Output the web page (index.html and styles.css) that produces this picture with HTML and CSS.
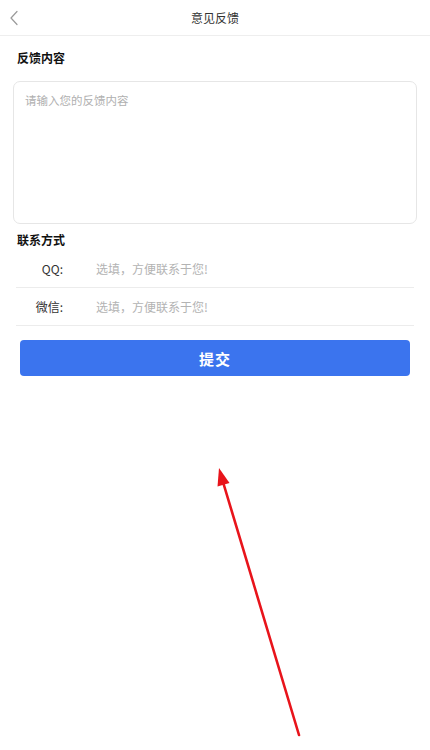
FILE: index.html
```html
<!DOCTYPE html>
<html lang="zh">
<head>
<meta charset="utf-8">
<title>意见反馈</title>
<link rel="stylesheet" href="styles.css">
</head>
<body>
<div class="page">
  <header class="nav">
    <span class="back">
      <svg width="10" height="16" viewBox="0 0 10 16"><path d="M8 1.5 L2 8 L8 14.5" fill="none" stroke="#9a9a9a" stroke-width="1.2" stroke-linecap="round" stroke-linejoin="round"/></svg>
    </span>
    <h1 class="nav-title">意见反馈</h1>
    <span></span>
  </header>
  <main class="content">
    <h2 class="sec-title">反馈内容</h2>
    <div class="textbox">请输入您的反馈内容</div>
    <h2 class="sec-title contact-title">联系方式</h2>
    <div class="row">
      <span class="label">QQ:</span>
      <span class="ph">选填，方便联系于您!</span>
    </div>
    <div class="row">
      <span class="label">微信:</span>
      <span class="ph">选填，方便联系于您!</span>
    </div>
    <button class="submit">提交</button>
  </main>
  <svg class="arrow" width="430" height="750" viewBox="0 0 430 750">
    <line x1="299" y1="735" x2="223" y2="482" stroke="#e8141b" stroke-width="2.6" stroke-linecap="round"/>
    <polygon points="219,468 229.5,483 217.5,486.5" fill="#e8141b"/>
  </svg>
</div>
</body>
</html>
```
FILE: styles.css
```css
* { box-sizing: border-box; }
html, body { margin: 0; padding: 0; background: #fff; }
body {
  font-family: "Noto Sans CJK SC", "Noto Sans", sans-serif;
  color: #222;
}
.page { position: relative; width: 430px; height: 750px; overflow: hidden; }
.nav {
  height: 36px;
  border-bottom: 1px solid #eeeeee;
  display: grid;
  grid-template-columns: 36px 1fr 36px;
  align-items: center;
}
.back { display: flex; align-items: center; padding-left: 9px; padding-top: 1px; }
.nav-title {
  margin: 0;
  text-align: center;
  font-size: 12px;
  font-weight: 400;
  color: #333;
  line-height: 20px;
}
.content { padding: 0 13px; display: flex; flex-direction: column; }
.sec-title {
  margin: 12px 0 0 4px;
  font-size: 12px;
  font-weight: 700;
  line-height: 20px;
  color: #111;
}
.textbox {
  margin-top: 13px;
  height: 143px;
  border: 1px solid #e6e6e6;
  border-radius: 7px;
  padding: 9px 11px;
  font-size: 11.5px;
  line-height: 18px;
  color: #b0b0b0;
}
.contact-title { margin-top: 6px; }
.row {
  margin: 0 3px;
  height: 38px;
  border-bottom: 1px solid #ececec;
  display: flex;
  align-items: center;
  gap: 33px;
}
.label {
  width: 47px;
  text-align: right;
  font-size: 12px;
  color: #333;
}
.ph { font-size: 12px; color: #b3b3b3; }
.submit {
  margin: 14px 7px 0;
  height: 36px;
  border: none;
  border-radius: 4px;
  background: #3b74ee;
  color: #fff;
  font-family: inherit;
  font-size: 15px;
  font-weight: 700;
  letter-spacing: 1px;
}
.arrow { position: absolute; left: 0; top: 0; pointer-events: none; }
```
